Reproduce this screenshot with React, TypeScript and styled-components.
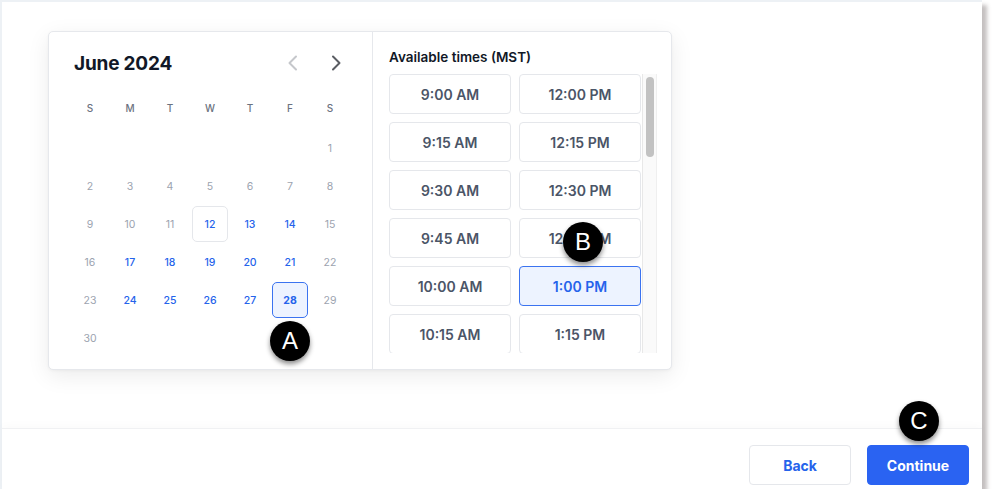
import React from "react";
import styled, { createGlobalStyle, css } from "styled-components";

const Global = createGlobalStyle`
  html, body { margin: 0; padding: 0; background: #ffffff; }
  body { font-family: Inter, "Noto Sans", sans-serif; -webkit-font-smoothing: antialiased; }
  * { box-sizing: border-box; }
`;

const Window = styled.div`
  position: relative;
  width: 982px;
  height: 489px;
  background: #ffffff;
  border-top: 2px solid #edf1f5;
  border-left: 2px solid #edf1f5;
  box-shadow: 5px 5px 4px rgba(70, 60, 60, 0.32);
  display: flex;
  flex-direction: column;
`;

const Main = styled.div`
  height: 426px;
  padding: 29px 0 0 46px;
`;

const Card = styled.div`
  width: 624px;
  height: 339px;
  display: flex;
  background: #fff;
  border: 1px solid #e6e8ec;
  border-radius: 5px;
  box-shadow: 0 6px 22px rgba(0, 0, 0, 0.08), 0 1px 3px rgba(0, 0, 0, 0.04);
`;

const CalendarPanel = styled.div`
  width: 324px;
  border-right: 1px solid #e6e8ec;
  padding: 19px 24px 0 23px;
`;

const CalHeader = styled.div`
  display: flex;
  align-items: center;
  justify-content: space-between;
  height: 24px;
  padding-left: 2px;
`;

const MonthTitle = styled.div`
  font-size: 19px;
  font-weight: 700;
  color: #111827;
  letter-spacing: -0.2px;
`;

const Nav = styled.div`
  display: flex;
  gap: 20px;
`;

const NavButton = styled.button<{ $muted?: boolean }>`
  width: 24px;
  height: 24px;
  display: flex;
  align-items: center;
  justify-content: center;
  background: none;
  border: none;
  padding: 0;
  color: ${(p) => (p.$muted ? "#c5c7cb" : "#5a5d63")};
`;

const WeekRow = styled.div`
  display: grid;
  grid-template-columns: repeat(7, 36px);
  column-gap: 4px;
  margin-top: 23px;
  height: 20px;
`;

const WeekDay = styled.div`
  text-align: center;
  font-size: 10px;
  line-height: 20px;
  font-weight: 500;
  color: #6b7280;
`;

const DaysGrid = styled.div`
  display: grid;
  grid-template-columns: repeat(7, 36px);
  grid-auto-rows: 36px;
  column-gap: 4px;
  row-gap: 2px;
  margin-top: 12px;
`;

type DayKind = "off" | "open" | "today" | "selected";

const Day = styled.div<{ $kind: DayKind }>`
  display: flex;
  align-items: center;
  justify-content: center;
  font-size: 10.5px;
  border-radius: 5px;
  border: 1px solid transparent;
  color: #9ca3af;
  font-weight: 400;
  ${(p) =>
    p.$kind !== "off" &&
    css`
      color: #2563eb;
      font-weight: 500;
    `}
  ${(p) =>
    p.$kind === "today" &&
    css`
      border-color: #e5e7eb;
    `}
  ${(p) =>
    p.$kind === "selected" &&
    css`
      border-color: #3b73f0;
      background: #edf3ff;
      font-weight: 700;
    `}
`;

const TimesPanel = styled.div`
  flex: 1;
  padding: 16px 15px 0 16px;
`;

const TimesTitle = styled.div`
  font-size: 13.5px;
  line-height: 18px;
  font-weight: 600;
  color: #111827;
  margin-bottom: 8px;
`;

const TimesArea = styled.div`
  display: flex;
  height: 279px;
  gap: 1px;
`;

const TimesViewport = styled.div`
  width: 252px;
  height: 279px;
  overflow: hidden;
`;

const ScrollTrack = styled.div`
  width: 15px;
  height: 279px;
  background: #fafafa;
  border-left: 1px solid #e8e8e8;
  border-right: 1px solid #efefef;
  padding: 3px 0 0 3px;
`;

const ScrollThumb = styled.div`
  width: 8px;
  border-radius: 4px;
  background: #c2c2c2;
`;

const TimesGrid = styled.div`
  display: grid;
  grid-template-columns: 1fr 1fr;
  gap: 8px;
  width: 252px;
`;

const TimeButton = styled.button<{ $selected?: boolean }>`
  height: 40px;
  border-radius: 4px;
  border: 1px solid #e5e7eb;
  background: #fff;
  font-family: Inter, sans-serif;
  font-size: 14px;
  font-weight: 600;
  color: #4b5567;
  padding: 0;
  ${(p) =>
    p.$selected &&
    css`
      border-color: #3b73f0;
      background: #edf3ff;
      color: #2563eb;
    `}
`;

const Footer = styled.div`
  height: 61px;
  border-top: 1px solid #f0f1f3;
  box-shadow: 0 -3px 8px rgba(0, 0, 0, 0.02);
  display: flex;
  justify-content: flex-end;
  gap: 16px;
  padding: 16px 13px 0 0;
`;

const ActionButton = styled.button<{ $primary?: boolean }>`
  width: 102px;
  height: 40px;
  border-radius: 4px;
  font-family: Inter, sans-serif;
  font-size: 14px;
  font-weight: 700;
  padding: 0;
  border: 1px solid #e5e7eb;
  background: #fff;
  color: #2563eb;
  ${(p) =>
    p.$primary &&
    css`
      border-color: #2a63f2;
      background: #2a63f2;
      color: #fff;
    `}
`;

const Badge = styled.div`
  position: absolute;
  width: 40px;
  height: 40px;
  border-radius: 50%;
  background: #000;
  color: #fff;
  display: flex;
  align-items: center;
  justify-content: center;
  font-family: "Liberation Sans", Arial, sans-serif;
  font-size: 24px;
  box-shadow: 0 3px 5px rgba(0, 0, 0, 0.45);
`;

const Chevron = ({ dir }: { dir: "left" | "right" }) => (
  <svg width="11" height="16" viewBox="0 0 11 16" fill="none">
    <polyline
      points={dir === "left" ? "9,1.5 2.5,8 9,14.5" : "2,1.5 8.5,8 2,14.5"}
      stroke="currentColor"
      strokeWidth="2"
      strokeLinecap="round"
      strokeLinejoin="round"
    />
  </svg>
);

const weekdays = ["S", "M", "T", "W", "T", "F", "S"];
const openDays = new Set([13, 14, 17, 18, 19, 20, 21, 24, 25, 26, 27]);

const fmt = (mins: number) => {
  const h24 = Math.floor(mins / 60);
  const m = mins % 60;
  const ampm = h24 >= 12 ? "PM" : "AM";
  const h = h24 % 12 === 0 ? 12 : h24 % 12;
  return `${h}:${m.toString().padStart(2, "0")} ${ampm}`;
};

export default function App() {
  const cells: (number | null)[] = [...Array(6).fill(null), ...Array.from({ length: 30 }, (_, i) => i + 1)];
  const times: string[] = [];
  for (let i = 0; i < 20; i++) {
    times.push(fmt(9 * 60 + i * 15));
    times.push(fmt(12 * 60 + i * 15));
  }
  const contentHeight = 20 * 48 - 8;
  const thumbHeight = Math.round((279 / contentHeight) * 273);
  return (
    <>
      <Global />
      <Window>
        <Main>
          <Card>
            <CalendarPanel>
              <CalHeader>
                <MonthTitle>June 2024</MonthTitle>
                <Nav>
                  <NavButton $muted>
                    <Chevron dir="left" />
                  </NavButton>
                  <NavButton>
                    <Chevron dir="right" />
                  </NavButton>
                </Nav>
              </CalHeader>
              <WeekRow>
                {weekdays.map((d, i) => (
                  <WeekDay key={i}>{d}</WeekDay>
                ))}
              </WeekRow>
              <DaysGrid>
                {cells.map((d, i) => {
                  if (d === null) return <div key={i} />;
                  const kind: DayKind =
                    d === 28 ? "selected" : d === 12 ? "today" : openDays.has(d) ? "open" : "off";
                  return (
                    <Day key={i} $kind={kind}>
                      {d}
                    </Day>
                  );
                })}
              </DaysGrid>
            </CalendarPanel>
            <TimesPanel>
              <TimesTitle>Available times (MST)</TimesTitle>
              <TimesArea>
                <TimesViewport>
                  <TimesGrid>
                    {times.map((t, i) => (
                      <TimeButton key={i} $selected={t === "1:00 PM" && i % 2 === 1}>
                        {t}
                      </TimeButton>
                    ))}
                  </TimesGrid>
                </TimesViewport>
                <ScrollTrack>
                  <ScrollThumb style={{ height: thumbHeight }} />
                </ScrollTrack>
              </TimesArea>
            </TimesPanel>
          </Card>
        </Main>
        <Footer>
          <ActionButton>Back</ActionButton>
          <ActionButton $primary>Continue</ActionButton>
        </Footer>
        <Badge style={{ left: 268, top: 319 }}>A</Badge>
        <Badge style={{ left: 561, top: 220 }}>B</Badge>
        <Badge style={{ left: 897, top: 399 }}>C</Badge>
      </Window>
    </>
  );
}
